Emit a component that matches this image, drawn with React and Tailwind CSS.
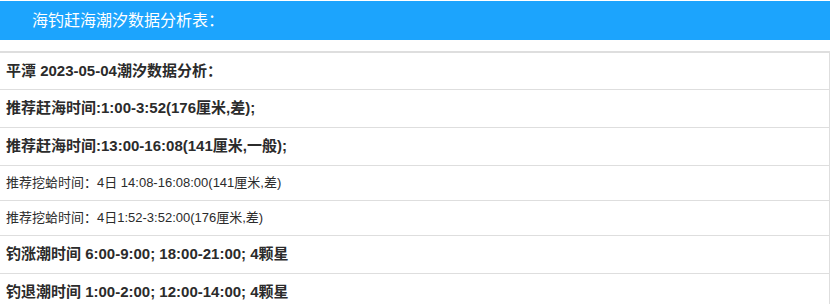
const rows = [
  { text: "平潭 2023-05-04潮汐数据分析：", h: "h-[37px]", size: "text-[15px] font-bold" },
  { text: "推荐赶海时间:1:00-3:52(176厘米,差);", h: "h-[38px]", size: "text-[15px] font-bold" },
  { text: "推荐赶海时间:13:00-16:08(141厘米,一般);", h: "h-[38px]", size: "text-[15px] font-bold" },
  { text: "推荐挖蛤时间：4日 14:08-16:08:00(141厘米,差)", h: "h-[35px]", size: "text-[13px]" },
  { text: "推荐挖蛤时间：4日1:52-3:52:00(176厘米,差)", h: "h-[35px]", size: "text-[13px]" },
  { text: "钓涨潮时间 6:00-9:00; 18:00-21:00; 4颗星", h: "h-[38px]", size: "text-[15px] font-bold" },
  { text: "钓退潮时间 1:00-2:00; 12:00-14:00; 4颗星", h: "h-[38px]", size: "text-[15px] font-bold" },
];

export default function App() {
  return (
    <div
      className="w-[830px] bg-white pt-px"
      style={{ fontFamily: '"Liberation Sans", "Noto Sans CJK SC", sans-serif' }}
    >
      {/* Blue title bar */}
      <div className="h-[39px] bg-[#1ca4fd] flex items-center pl-8">
        <h2 className="text-white text-[16px] leading-none">海钓赶海潮汐数据分析表：</h2>
      </div>

      {/* Tide rows */}
      <div className="mt-[11px] border-t-2 border-r border-[#dedede]">
        {rows.map((row, i) => (
          <div
            key={i}
            className={`${row.h} flex items-center px-1.5 border-b border-[#dedede] text-[#2b2b2b] ${row.size}`}
          >
            {row.text}
          </div>
        ))}
      </div>
    </div>
  );
}
